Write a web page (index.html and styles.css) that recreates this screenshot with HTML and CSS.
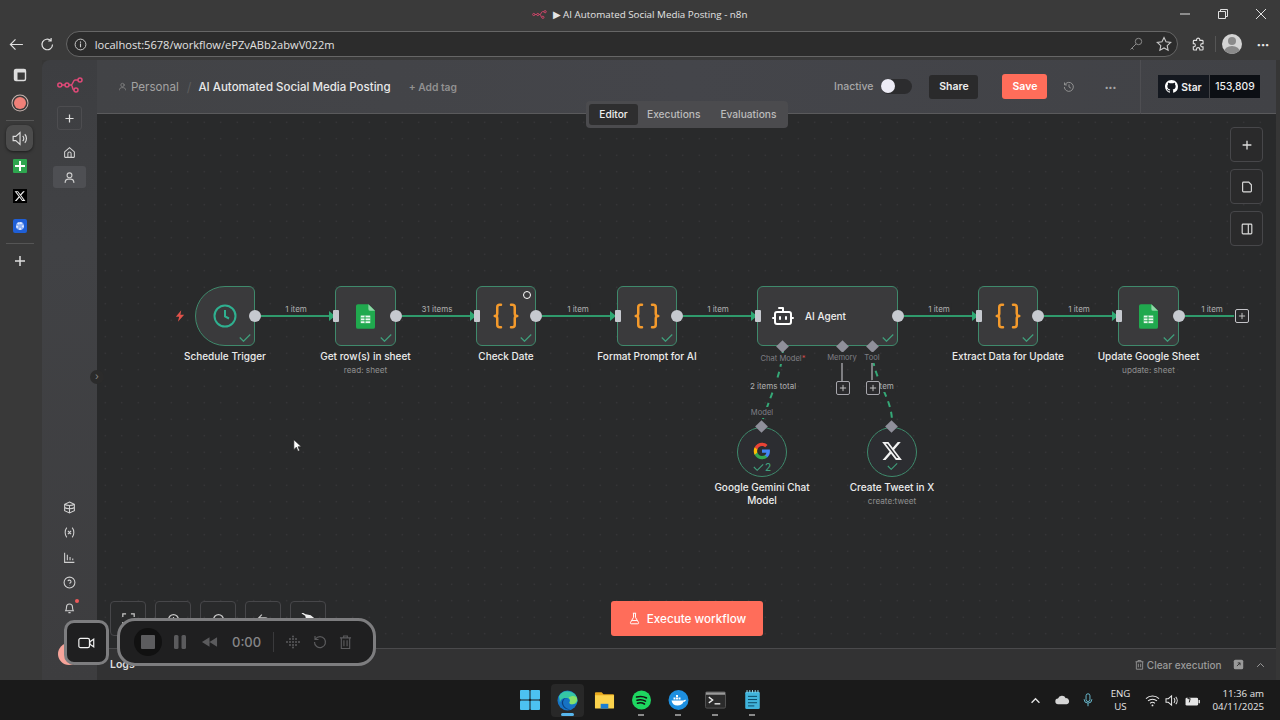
FILE: index.html
```html
<!DOCTYPE html>
<html lang="en">
<head>
<meta charset="utf-8">
<title>AI Automated Social Media Posting - n8n</title>
<link rel="stylesheet" href="styles.css">
</head>
<body>
<svg class="defs" width="0" height="0" aria-hidden="true">
  <defs>
    <symbol id="i-logo" viewBox="0 0 26 16"><g fill="none" stroke="currentColor" stroke-width="1.5"><circle cx="2.8" cy="8" r="2"/><circle cx="10" cy="8" r="2"/><circle cx="23" cy="3" r="2"/><circle cx="19" cy="13" r="2"/><path d="M4.8 8h3.2M12 8h2c2 0 2-5 4-5h3M14 8c2 0 1 5 3 5"/></g></symbol>
    <symbol id="i-plus" viewBox="0 0 16 16"><path d="M8 3v10M3 8h10" fill="none" stroke="currentColor" stroke-width="1.5"/></symbol>
    <symbol id="i-user" viewBox="0 0 24 24"><g fill="none" stroke="currentColor" stroke-width="2" stroke-linecap="round"><circle cx="12" cy="8" r="4.5"/><path d="M4 21v-1a6 6 0 0 1 6-5h4a6 6 0 0 1 6 5v1"/></g></symbol>
    <symbol id="i-braces" viewBox="0 0 24 24"><path fill="none" stroke="currentColor" stroke-width="2" stroke-linecap="round" stroke-linejoin="round" d="M8 3H7a2 2 0 0 0-2 2v5a2 2 0 0 1-2 2 2 2 0 0 1 2 2v5c0 1.1.9 2 2 2h1M16 21h1a2 2 0 0 0 2-2v-5c0-1.1.9-2 2-2a2 2 0 0 1-2-2V5a2 2 0 0 0-2-2h-1"/></symbol>
    <symbol id="i-sheet" viewBox="0 0 20 26"><path fill="#20a94e" d="M2 0h11l7 7v17a2 2 0 0 1-2 2H2a2 2 0 0 1-2-2V2a2 2 0 0 1 2-2z"/><path fill="#8fd6a6" d="M13 0l7 7h-5a2 2 0 0 1-2-2z"/><path fill="#e9f7ee" d="M5 12h10v8H5z"/><path stroke="#20a94e" stroke-width="1" d="M5 14.500h10M5 17.500h10M9.500 12v8"/></symbol>
    <symbol id="i-check" viewBox="0 0 16 12"><path d="M1 6l5 5 9-9" fill="none" stroke="currentColor" stroke-width="1.600"/></symbol>
    <symbol id="i-x" viewBox="0 0 24 24"><path fill="currentColor" d="M18.244 2.25h3.308l-7.227 8.26 8.502 11.24H16.17l-5.214-6.817L4.99 21.75H1.68l7.73-8.835L1.254 2.25H8.08l4.713 6.231zm-1.161 17.52h1.833L7.084 4.126H5.117z"/></symbol>
  </defs>
</svg>
<div class="app">
  <header class="titlebar">
    <div class="title-spacer"></div>
    <div class="title-text"><svg class="title-logo"><use href="#i-logo"/></svg><span>▶ AI Automated Social Media Posting - n8n</span></div>
    <div class="title-spacer window-controls">
      <svg class="wc" viewBox="0 0 12 12"><path d="M1 6h10" stroke="currentColor" fill="none"/></svg>
      <svg class="wc" viewBox="0 0 12 12"><path d="M1.500 3.500h7v7h-7zM3.500 3.500v-2h7v7h-2" stroke="currentColor" fill="none"/></svg>
      <svg class="wc" viewBox="0 0 12 12"><path d="M1 1l10 10M11 1L1 11" stroke="currentColor" fill="none"/></svg>
    </div>
  </header>

  <div class="browserbar">
    <svg class="nav-icon" viewBox="0 0 16 16"><path d="M15 8H2M7 2.500L1.500 8 7 13.500" fill="none" stroke="currentColor" stroke-width="1.300"/></svg>
    <svg class="nav-icon" viewBox="0 0 16 16"><path d="M13.500 8a5.700 5.700 0 1 1-1.800-4.200M12 1v3.200H8.800" fill="none" stroke="currentColor" stroke-width="1.300"/></svg>
    <div class="urlbar">
      <svg class="url-info" viewBox="0 0 14 14"><circle cx="7" cy="7" r="5.800" fill="none" stroke="currentColor"/><path d="M7 6v4M7 3.800v1.200" stroke="currentColor" stroke-width="1.200"/></svg>
      <span class="url-text">localhost:5678/workflow/ePZvABb2abwV022m</span>
      <svg class="url-key" viewBox="0 0 14 14"><circle cx="9.500" cy="4.500" r="3.200" fill="none" stroke="currentColor"/><path d="M7 7l-5.500 5.500M3 11l1.500 1.500" fill="none" stroke="currentColor"/></svg>
      <svg class="url-star" viewBox="0 0 16 16"><path d="M8 1.500l2 4.300 4.700.6-3.500 3.200.9 4.700L8 12l-4.100 2.300.9-4.700L1.300 6.400 6 5.800z" fill="none" stroke="currentColor" stroke-width="1.100"/></svg>
    </div>
    <svg class="ext-icon" viewBox="0 0 16 16"><path d="M6 2.500a1.800 1.800 0 0 1 3.500 0V3.500h2.500a1 1 0 0 1 1 1V7h-.8a1.800 1.800 0 0 0 0 3.600h.8V13a1 1 0 0 1-1 1H9.500v-.8a1.800 1.800 0 0 0-3.600 0v.8H3.500a1 1 0 0 1-1-1v-2.500h.8a1.800 1.800 0 0 0 0-3.500H2.500V4.500a1 1 0 0 1 1-1H6z" fill="none" stroke="currentColor" stroke-width="1.200"/></svg>
    <span class="bar-sep"></span>
    <div class="profile"><span class="profile-head"></span><span class="profile-body"></span></div>
    <span class="bar-dots">···</span>
  </div>

  <div class="main">
    <aside class="tabs">
      <svg class="tab-ico" viewBox="0 0 14 14"><rect x="1.500" y="1.500" width="11" height="11" rx="1.500" fill="none" stroke="currentColor" stroke-width="1.400"/><path d="M1.500 1.500h11v3h-8v8h-3z" fill="currentColor"/></svg>
      <span class="rec-dot"></span>
      <span class="tab-rule"></span>
      <span class="tab-active"><svg class="tab-speaker" viewBox="0 0 16 16"><path d="M2 6h2.500L8.500 2.500v11L4.500 10H2zM11 5.500a3.500 3.500 0 0 1 0 5M13 4a6 6 0 0 1 0 8" fill="none" stroke="currentColor" stroke-width="1.100"/></svg></span>
      <span class="tab-sheets"></span>
      <span class="tab-x"><svg class="tab-x-ico"><use href="#i-x"/></svg></span>
      <span class="tab-gear"><span class="gear-ring"></span></span>
      <span class="tab-rule tab-rule-low"></span>
      <svg class="tab-plus"><use href="#i-plus"/></svg>
    </aside>

    <nav class="sidebar">
      <svg class="side-logo"><use href="#i-logo"/></svg>
      <span class="side-add"><svg class="side-add-ico"><use href="#i-plus"/></svg></span>
      <svg class="side-ico side-home" viewBox="0 0 24 24"><path d="M3 11l9-8 9 8v9a1 1 0 0 1-1 1H4a1 1 0 0 1-1-1zM9 21v-7a3 3 0 0 1 6 0v7" fill="none" stroke="currentColor" stroke-width="2"/></svg>
      <span class="side-active"><svg class="side-ico"><use href="#i-user"/></svg></span>
      <div class="side-bottom">
        <svg class="side-ico" viewBox="0 0 24 24"><path d="M12 2l9 4v12l-9 4-9-4V6zM3 6c3 3 15 3 18 0M3 12c3 3 15 3 18 0M12 9v13" fill="none" stroke="currentColor" stroke-width="2"/></svg>
        <svg class="side-ico" viewBox="0 0 24 24"><path d="M7 3c-4 5-4 13 0 18M17 3c4 5 4 13 0 18M9 9l6 6M15 9l-6 6" fill="none" stroke="currentColor" stroke-width="2"/></svg>
        <svg class="side-ico" viewBox="0 0 24 24"><path d="M3 3v18h18M8 17V7M13 17v-6M18 17v-3" fill="none" stroke="currentColor" stroke-width="2"/></svg>
        <svg class="side-ico" viewBox="0 0 24 24"><circle cx="12" cy="12" r="10" fill="none" stroke="currentColor" stroke-width="2"/><path d="M9 9.500a3 3 0 0 1 5.800 1c0 2-2.800 2.500-2.800 3.500M12 17.500v.5" fill="none" stroke="currentColor" stroke-width="2"/></svg>
        <span class="bell"><svg class="side-ico" viewBox="0 0 24 24"><path d="M5 18c1-2 1.500-3 1.500-7a5.500 5.500 0 0 1 11 0c0 4 .5 5 1.500 7zM10 21.500h4" fill="none" stroke="currentColor" stroke-width="2"/></svg><span class="bell-dot"></span></span>
      </div>
      <span class="avatar"></span>
      <span class="side-toggle">›</span>
    </nav>

    <section class="content">
      <div class="header">
        <svg class="crumb-ico"><use href="#i-user"/></svg>
        <span class="crumb">Personal</span>
        <span class="crumb-sep">/</span>
        <span class="wf-name">AI Automated Social Media Posting</span>
        <span class="add-tag">+ Add tag</span>
        <span class="inactive">Inactive</span>
        <span class="toggle"><span class="knob"></span></span>
        <span class="btn-share">Share</span>
        <span class="btn-save">Save</span>
        <svg class="history" viewBox="0 0 16 16"><path d="M2.500 5a6 6 0 1 1-.7 3M2 2v3.200h3.200M8 4.500V8l2.500 1.500" fill="none" stroke="currentColor" stroke-width="1.200"/></svg>
        <span class="head-dots">···</span>
        <span class="head-rule"></span>
        <div class="gh"><span class="gh-star"><svg class="gh-ico" viewBox="0 0 16 16"><path fill="currentColor" d="M8 0C3.58 0 0 3.58 0 8c0 3.54 2.29 6.53 5.47 7.59.4.07.55-.17.55-.38 0-.19-.01-.82-.01-1.49-2.01.37-2.53-.49-2.69-.94-.09-.23-.48-.94-.82-1.13-.28-.15-.68-.52-.01-.53.63-.01 1.08.58 1.23.82.72 1.21 1.87.87 2.33.66.07-.52.28-.87.51-1.07-1.78-.2-3.64-.89-3.64-3.95 0-.87.31-1.59.82-2.15-.08-.2-.36-1.02.08-2.12 0 0 .67-.21 2.2.82.64-.18 1.32-.27 2-.27s1.36.09 2 .27c1.53-1.04 2.2-.82 2.2-.82.44 1.1.16 1.92.08 2.12.51.56.82 1.27.82 2.15 0 3.070-1.870 3.750-3.650 3.950.29.25.54.73.54 1.480 0 1.070-.01 1.930-.01 2.200 0 .21.15.46.55.38A8.010 8.010 0 0 0 16 8c0-4.420-3.580-8-8-8z"/></svg>Star</span><span class="gh-count">153,809</span></div>
      </div>

      <div class="canvas">
        <svg class="edges" viewBox="0 0 1180 534">
          <g class="edge-main">
            <path d="M164 202H234M305 202H375M445 202H515M586 202H655M807 202H876M947 202H1016M1088 202H1137"/>
          </g>
          <g class="edge-arrow">
            <path d="M232 197l6 5-6 5zM373 197l6 5-6 5zM513 197l6 5-6 5zM654 197l6 5-6 5zM875 197l6 5-6 5zM1015 197l6 5-6 5z"/>
          </g>
          <path class="edge-dash" d="M686 236C684 262 672 285 665 308M776 246C780 270 795 285 795 308"/>
          <path class="edge-grey" d="M745 246V267M775 246V267"/>
        </svg>

        <span class="edge-label el-1">1 item</span>
        <span class="edge-label el-2">31 items</span>
        <span class="edge-label el-3">1 item</span>
        <span class="edge-label el-4">1 item</span>
        <span class="edge-label el-5">1 item</span>
        <span class="edge-label el-6">1 item</span>
        <span class="edge-label el-7">1 item</span>
        <span class="edge-label el-8">2 items total</span>
        <span class="edge-label el-9">1 item</span>

        <svg class="bolt" viewBox="0 0 12 14"><path d="M7.500 0L1 8h4l-1.500 6L11 5.500H6.500z" fill="currentColor"/></svg>

        <div class="node node-trigger n-schedule">
          <svg class="ico-clock" viewBox="0 0 24 24"><circle cx="12" cy="12" r="10.500" fill="none" stroke="currentColor" stroke-width="2"/><path d="M12 6v6.500l4 2" fill="none" stroke="currentColor" stroke-width="2"/></svg>
          <svg class="tick"><use href="#i-check"/></svg>
          <span class="port-out"></span>
          <div class="node-label">Schedule Trigger</div>
        </div>
        <div class="node n-rows">
          <svg class="ico-sheet"><use href="#i-sheet"/></svg>
          <svg class="tick"><use href="#i-check"/></svg>
          <span class="port-in"></span><span class="port-out"></span>
          <div class="node-label">Get row(s) in sheet<small>read: sheet</small></div>
        </div>
        <div class="node n-date">
          <svg class="ico-braces"><use href="#i-braces"/></svg>
          <span class="spinner"></span>
          <svg class="tick"><use href="#i-check"/></svg>
          <span class="port-in"></span><span class="port-out"></span>
          <div class="node-label">Check Date</div>
        </div>
        <div class="node n-format">
          <svg class="ico-braces"><use href="#i-braces"/></svg>
          <svg class="tick"><use href="#i-check"/></svg>
          <span class="port-in"></span><span class="port-out"></span>
          <div class="node-label">Format Prompt for AI</div>
        </div>
        <div class="node n-agent">
          <svg class="ico-bot" viewBox="0 0 24 24"><path d="M12 8V4H8M2 14h2M20 14h2" fill="none" stroke="currentColor" stroke-width="2" stroke-linecap="round" stroke-linejoin="round"/><rect x="4" y="8" width="16" height="12" rx="2" fill="none" stroke="currentColor" stroke-width="2"/><path d="M9 13v2M15 13v2" stroke="currentColor" stroke-width="2" stroke-linecap="round"/></svg>
          <span class="agent-name">AI Agent</span>
          <svg class="tick"><use href="#i-check"/></svg>
          <span class="port-in"></span><span class="port-out"></span>
          <span class="diamond d-chat"></span><span class="diamond d-mem"></span><span class="diamond d-tool"></span>
        </div>
        <span class="port-label pl-chat">Chat Model<em>*</em></span>
        <span class="port-label pl-mem">Memory</span>
        <span class="port-label pl-tool">Tool</span>
        <span class="port-label pl-model">Model</span>
        <span class="mini-plus mp-mem"><svg class="mini-ico"><use href="#i-plus"/></svg></span>
        <span class="mini-plus mp-tool"><svg class="mini-ico"><use href="#i-plus"/></svg></span>
        <span class="mini-plus mp-end"><svg class="mini-ico"><use href="#i-plus"/></svg></span>

        <div class="node n-extract">
          <svg class="ico-braces"><use href="#i-braces"/></svg>
          <svg class="tick"><use href="#i-check"/></svg>
          <span class="port-in"></span><span class="port-out"></span>
          <div class="node-label">Extract Data for Update</div>
        </div>
        <div class="node n-update">
          <svg class="ico-sheet"><use href="#i-sheet"/></svg>
          <svg class="tick"><use href="#i-check"/></svg>
          <span class="port-in"></span><span class="port-out"></span>
          <div class="node-label">Update Google Sheet<small>update: sheet</small></div>
        </div>

        <div class="node node-round n-gemini">
          <svg class="ico-google" viewBox="0 0 24 24"><path fill="#4285f4" d="M22.560 12.250c0-.78-.07-1.530-.2-2.250H12v4.260h5.920c-.26 1.370-1.040 2.530-2.210 3.310v2.770h3.570c2.080-1.920 3.280-4.740 3.280-8.090z"/><path fill="#34a853" d="M12 23c2.970 0 5.460-.98 7.280-2.660l-3.570-2.770c-.98.66-2.230 1.060-3.710 1.060-2.860 0-5.290-1.930-6.160-4.530H2.180v2.840C3.990 20.530 7.700 23 12 23z"/><path fill="#fbbc05" d="M5.840 14.090c-.22-.66-.35-1.360-.35-2.090s.13-1.430.35-2.090V7.070H2.180C1.430 8.550 1 10.220 1 12s.43 3.450 1.180 4.930l2.850-2.220.81-.62z"/><path fill="#ea4335" d="M12 5.380c1.620 0 3.060.56 4.210 1.640l3.150-3.150C17.450 2.090 14.970 1 12 1 7.700 1 3.990 3.470 2.180 7.070l3.660 2.840c.87-2.600 3.300-4.530 6.160-4.530z"/></svg>
          <span class="round-status"><svg class="tick-round"><use href="#i-check"/></svg>2</span>
          <span class="diamond d-top"></span>
          <div class="node-label">Google Gemini Chat Model</div>
        </div>
        <div class="node node-round n-tweet">
          <svg class="ico-x"><use href="#i-x"/></svg>
          <span class="round-status"><svg class="tick-round"><use href="#i-check"/></svg></span>
          <span class="diamond d-top"></span>
          <div class="node-label">Create Tweet in X<small>create:tweet</small></div>
        </div>

        <div class="side-tools">
          <span class="tool-btn"><svg class="tool-ico"><use href="#i-plus"/></svg></span>
          <span class="tool-btn"><svg class="tool-ico" viewBox="0 0 16 16"><path d="M3 3.500a1 1 0 0 1 1-1h6l3 3v7a1 1 0 0 1-1 1H4a1 1 0 0 1-1-1z" fill="none" stroke="currentColor" stroke-width="1.300"/></svg></span>
          <span class="tool-btn"><svg class="tool-ico" viewBox="0 0 16 16"><rect x="2.500" y="2.500" width="11" height="11" rx="1" fill="none" stroke="currentColor" stroke-width="1.300"/><path d="M9.500 2.500v11" stroke="currentColor" stroke-width="1.300"/></svg></span>
        </div>

        <div class="canvas-tools">
          <span class="ct-btn"><svg class="ct-ico" viewBox="0 0 16 16"><path d="M1 5V1h4M11 1h4v4M15 11v4h-4M5 15H1v-4" fill="none" stroke="currentColor" stroke-width="1.500"/></svg></span>
          <span class="ct-btn"><svg class="ct-ico" viewBox="0 0 16 16"><circle cx="8" cy="8" r="6" fill="none" stroke="currentColor" stroke-width="1.500"/><path d="M5 8h6M8 5v6" stroke="currentColor" stroke-width="1.500"/></svg></span>
          <span class="ct-btn"><svg class="ct-ico" viewBox="0 0 16 16"><circle cx="8" cy="8" r="6" fill="none" stroke="currentColor" stroke-width="1.500"/><path d="M5 8h6" stroke="currentColor" stroke-width="1.500"/></svg></span>
          <span class="ct-btn"><svg class="ct-ico" viewBox="0 0 16 16"><path d="M6 2L2 6l4 4M2 6h8a4 4 0 0 1 4 4v3" fill="none" stroke="currentColor" stroke-width="1.500"/></svg></span>
          <span class="ct-btn"><svg class="ct-ico ct-broom" viewBox="0 0 16 16"><path d="M1 0l6 3.500M5 2l5 1 5 4-2 3-7-4z" fill="currentColor" stroke="currentColor" stroke-width="1.500"/></svg></span>
        </div>

        <button class="execute"><svg class="flask" viewBox="0 0 16 16"><path d="M6 1.500h4M6.800 1.500v5L3 13a1 1 0 0 0 .9 1.500h8.200A1 1 0 0 0 13 13L9.200 6.500v-5M5 10.500h6" fill="none" stroke="currentColor" stroke-width="1.200"/></svg>Execute workflow</button>

        <div class="editor-tabs"><span class="et et-active">Editor</span><span class="et">Executions</span><span class="et">Evaluations</span></div>

        <svg class="cursor" viewBox="0 0 12 16"><path d="M1 1v12l3-3 2 5 2-1-2-4.500h4z" fill="#fff" stroke="#222" stroke-width=".8"/></svg>
      </div>

      <div class="logs">
        <span class="logs-title">Logs</span>
        <span class="clear"><svg class="clear-ico" viewBox="0 0 14 14"><path d="M2 3.500h10M5 3.500V2h4v1.500M3 3.500V13h8V3.500M5.500 6v4.500M8.500 6v4.500" fill="none" stroke="currentColor" stroke-width="1.100"/></svg>Clear execution</span>
        <svg class="pop-ico" viewBox="0 0 14 14"><rect x="1" y="1" width="12" height="12" rx="2" fill="currentColor"/><path d="M5 9l4-4M6 5h3v3" fill="none" stroke="#333" stroke-width="1.200"/></svg>
        <svg class="up-ico" viewBox="0 0 12 8"><path d="M1.500 6.500L6 2l4.500 4.500" fill="none" stroke="currentColor" stroke-width="1.300"/></svg>
      </div>
    </section>

    <div class="cam-box"><svg class="cam-ico" viewBox="0 0 20 14"><rect x="1" y="1.500" width="12.500" height="11" rx="2" fill="none" stroke="currentColor" stroke-width="1.400"/><path d="M14 5.500l4.500-3v9l-4.500-3z" fill="none" stroke="currentColor" stroke-width="1.400"/></svg></div>
    <div class="recorder">
      <span class="rec-stop"><span class="rec-square"></span></span>
      <svg class="rec-pause" viewBox="0 0 14 16"><rect x="1" y="1" width="4.500" height="14" rx="1.500" fill="currentColor"/><rect x="8.500" y="1" width="4.500" height="14" rx="1.500" fill="currentColor"/></svg>
      <svg class="rec-back" viewBox="0 0 18 12"><path d="M9 1L1 6l8 5zM17 1L9 6l8 5z" fill="currentColor"/></svg>
      <span class="rec-time">0:00</span>
      <span class="rec-rule"></span>
      <svg class="rec-grid" viewBox="0 0 16 14"><g fill="currentColor"><circle cx="2" cy="7" r="1"/><circle cx="5" cy="4" r="1"/><circle cx="5" cy="7" r="1"/><circle cx="5" cy="10" r="1"/><circle cx="8" cy="1.500" r="1"/><circle cx="8" cy="4" r="1"/><circle cx="8" cy="7" r="1"/><circle cx="8" cy="10" r="1"/><circle cx="8" cy="12.500" r="1"/><circle cx="11" cy="4" r="1"/><circle cx="11" cy="7" r="1"/><circle cx="11" cy="10" r="1"/><circle cx="14" cy="7" r="1"/></g></svg>
      <svg class="rec-undo" viewBox="0 0 14 14"><path d="M2.500 4a5.500 5.500 0 1 1-1 3M2 1v3.500h3.500" fill="none" stroke="currentColor" stroke-width="1.200"/></svg>
      <svg class="rec-trash" viewBox="0 0 14 16"><path d="M1 3.500h12M5 3.500V1.500h4v2M2.500 3.500V15h9V3.500M5.300 6v6.500M8.700 6v6.500" fill="none" stroke="currentColor" stroke-width="1.200"/></svg>
    </div>
  </div>

  <footer class="taskbar">
    <div class="task-apps">
      <svg class="app-win" viewBox="0 0 20 20"><g fill="#4cc2f1"><rect x="0" y="0" width="9.500" height="9.500" rx="1"/><rect x="10.500" y="0" width="9.500" height="9.500" rx="1"/><rect x="0" y="10.500" width="9.500" height="9.500" rx="1"/><rect x="10.500" y="10.500" width="9.500" height="9.500" rx="1"/></g></svg>
      <span class="app-edge-wrap"><svg class="app-edge" viewBox="0 0 22 22"><circle cx="11" cy="11" r="10.500" fill="#1672c4"/><path d="M2 6.500A10.500 10.500 0 0 1 21.500 11c0 2.500-2.500 4-5 4-2 0-3.500-.8-3.500-2 1-1.500.5-4-2-4.500C7 7.800 4 9 3 13c-.3-2.500-.5-4.500-1-6.500z" fill="#35c6a5"/><path d="M21 8.500c.7 3-2 6.500-5 6.500-2 0-3-.8-3-2 1.500-2 .5-4-1-5 4-2.500 7.500-2 9 .5z" fill="#86e06a"/><path d="M11 8.500c-3.500 0-5 3-4.500 6S10 20 14 20.500c-3 .5-7-1-8.500-5S7 7.500 11 8.500z" fill="#0b3f7d"/></svg></span>
      <svg class="app-ico" viewBox="0 0 22 20"><path d="M1 3a1 1 0 0 1 1-1h6l2 2h10a1 1 0 0 1 1 1v1H1z" fill="#e8a91e"/><path d="M1 5h20v13a1 1 0 0 1-1 1H2a1 1 0 0 1-1-1z" fill="#fcd34d"/><path d="M7 14h8v5H7z" fill="#1d7fd1"/></svg>
      <span class="app-run"><svg class="app-ico" viewBox="0 0 20 20"><circle cx="10" cy="10" r="9.500" fill="#1ed760"/><path d="M5 7c4-1 7-.7 10 1M5.500 10.200c3.200-.8 6-.5 8.500 1M6 13.200c2.500-.6 5-.4 7 .8" fill="none" stroke="#111" stroke-width="1.500" stroke-linecap="round"/></svg></span>
      <span class="app-run"><svg class="app-ico" viewBox="0 0 20 20"><circle cx="10" cy="10" r="10" fill="#1d8fe0"/><path d="M3 10.500h12c.7-.8 1.700-1 2.500-.5-.5 1.300-1.500 1.800-2.500 1.800-1 2.500-3 3.700-6 3.700-3.500 0-5.500-2-6-5z" fill="#fff"/><path d="M5 7.500h2v2H5zM7.500 7.500h2v2h-2zM10 7.500h2v2h-2zM7.500 5h2v2h-2z" fill="#fff"/></svg></span>
      <span class="app-run"><svg class="app-ico" viewBox="0 0 22 18"><rect x=".5" y=".5" width="21" height="17" rx="1.500" fill="#2b2b2b" stroke="#555"/><rect x="1" y="1" width="20" height="2.500" fill="#9a9a9a"/><path d="M4 6l4 3-4 3" fill="none" stroke="#eee" stroke-width="1.400"/><path d="M10 13h6" stroke="#eee" stroke-width="1.400"/></svg></span>
      <span class="app-run"><svg class="app-ico" viewBox="0 0 18 22"><rect x="1" y="2" width="16" height="19" rx="1.500" fill="#41b4dc"/><path d="M4 7h10M4 10.500h10M4 14h10M4 17.500h7" stroke="#0c4a66" stroke-width="1.100"/><path d="M3 0v3M6 0v3M9 0v3M12 0v3M15 0v3" stroke="#9adcf0" stroke-width="1"/></svg></span>
    </div>
    <div class="tray">
      <svg class="tray-chev" viewBox="0 0 12 8"><path d="M1.500 6.500L6 2l4.500 4.500" fill="none" stroke="currentColor" stroke-width="1.500"/></svg>
      <svg class="tray-cloud" viewBox="0 0 16 10"><path d="M3.500 9.500a3 3 0 0 1-.3-6A4.500 4.500 0 0 1 11.500 3a3.300 3.300 0 0 1 1 6.500z" fill="currentColor"/></svg>
      <svg class="tray-mic" viewBox="0 0 12 18"><rect x="3.500" y="1" width="5" height="10" rx="2.500" fill="none" stroke="currentColor" stroke-width="1.200"/><path d="M1 8a5 5 0 0 0 10 0M6 13v4" fill="none" stroke="currentColor" stroke-width="1.200"/></svg>
      <div class="lang">ENG<br>US</div>
      <svg class="tray-ico tray-wifi" viewBox="0 0 16 14"><path d="M1 5a10 10 0 0 1 14 0M3.200 7.500a7 7 0 0 1 9.600 0M5.500 10a3.500 3.500 0 0 1 5 0" fill="none" stroke="currentColor" stroke-width="1.200"/><circle cx="8" cy="12.300" r="1" fill="currentColor"/></svg>
      <svg class="tray-ico" viewBox="0 0 16 14"><path d="M1 5h2.500L7 2v10L3.500 9H1zM9.500 4.500a3.500 3.500 0 0 1 0 5M11.500 3a6 6 0 0 1 0 8" fill="none" stroke="currentColor" stroke-width="1.100"/></svg>
      <svg class="tray-ico" viewBox="0 0 16 14"><rect x=".5" y="4" width="13.500" height="8.500" rx="1.500" fill="currentColor"/><rect x="14.500" y="6.500" width="1.500" height="3.500" fill="currentColor"/><path d="M5 0L3 5h2.500L4.500 9" fill="none" stroke="#1a1a1a" stroke-width="1"/></svg>
      <div class="clock">11:36 am<br>04/11/2025</div>
    </div>
  </footer>
</div>
</body>
</html>
```
FILE: styles.css
```css
* { box-sizing: border-box; }
html, body { margin: 0; height: 100%; background: #1a1a1a; }
.defs { position: absolute; }
svg { display: block; }
.app { width: 1280px; height: 720px; display: flex; flex-direction: column; overflow: hidden; font-family: Inter, "Liberation Sans", sans-serif; color: #e0e0e0; }

/* Title bar */
.titlebar { height: 28px; display: flex; align-items: center; background: #3a3a3a; }
.title-spacer { flex: 1; }
.title-text { display: flex; align-items: center; gap: 6px; font: 400 9.800px "Open Sans", sans-serif; color: #e4e4e4; padding-top: 1px; margin-left: 12px; }
.title-logo { width: 15px; height: 9px; color: #e0466e; }
.window-controls { display: flex; justify-content: flex-end; gap: 26px; padding-right: 13px; color: #e0e0e0; }
.wc { width: 12px; height: 12px; }

/* Browser bar */
.browserbar { height: 32px; display: flex; align-items: center; background: #3a3a3a; padding: 0 11px 0 9px; color: #e0e0e0; }
.nav-icon { width: 15px; height: 15px; margin-right: 16px; }
.nav-icon + .nav-icon { margin-right: 12px; }
.urlbar { width: 1112px; margin-left: -1px; height: 26px; flex: none; display: flex; align-items: center; background: #2c2c2c; border: 1px solid #666; border-radius: 13px; padding: 0 5px 0 7px; }
.url-info { width: 13px; height: 13px; color: #d0d0d0; }
.url-text { margin-left: 8px; font: 400 11.100px "Open Sans", sans-serif; color: #e2e2e2; }
.url-key { width: 14px; height: 14px; margin-left: auto; color: #8a8a8a; }
.url-star { width: 16px; height: 16px; margin-left: 13px; color: #c8c8c8; }
.ext-icon { width: 15px; height: 15px; margin-left: 13px; }
.bar-sep { width: 1px; height: 16px; background: #555; margin-left: 10px; }
.profile { width: 20px; height: 20px; border-radius: 50%; background: #d4d4d4; margin-left: 6px; position: relative; overflow: hidden; flex: none; }
.profile-head { position: absolute; left: 6px; top: 3px; width: 8px; height: 8px; border-radius: 50%; background: #8a8a8a; }
.profile-body { position: absolute; left: 2px; top: 12px; width: 16px; height: 12px; border-radius: 50%; background: #8a8a8a; }
.bar-dots { margin-left: 14px; font-size: 14px; font-weight: 700; color: #e8e8e8; letter-spacing: -.5px; }

/* Main */
.main { flex: 1; display: flex; position: relative; background: #363636; min-height: 0; }
.tabs { width: 42px; flex: none; display: flex; flex-direction: column; align-items: center; color: #d8d8d8; background: #393939; padding: 8px 3px 0 0; }
.tab-ico { width: 14px; height: 14px; color: #ddd; }
.tab-speaker { width: 17px; height: 17px; color: #ddd; }
.rec-dot { width: 12px; height: 12px; border-radius: 50%; background: #f08078; box-shadow: 0 0 0 1.500px #3a3a3a, 0 0 0 2.500px #c9b5b0; margin: 15px 0 11px; }
.tab-rule { width: 28px; height: 1px; background: #555; }
.tab-active { width: 27px; height: 26px; margin: 4px 0 8px; border-radius: 7px; background: #4c4c4c; box-shadow: 0 1px 3px #0008; display: flex; align-items: center; justify-content: center; }
.tab-sheets { width: 14px; height: 14px; margin-bottom: 16px; background: linear-gradient(#fff,#fff) center/10px 2px no-repeat, linear-gradient(#fff,#fff) center/2px 10px no-repeat, #2ea64f; border-radius: 1px; }
.tab-x { width: 14px; height: 14px; margin-bottom: 16px; background: #000; display: flex; align-items: center; justify-content: center; }
.tab-x-ico { width: 12px; height: 12px; color: #eee; }
.tab-gear { width: 14px; height: 14px; border-radius: 2px; background: #1f5fd6; display: flex; align-items: center; justify-content: center; }
.gear-ring { width: 8px; height: 8px; border-radius: 50%; border: 2px dotted #dfe9ff; background: #8fb2f5; }
.tab-rule-low { margin-top: 10px; }
.tab-plus { width: 16px; height: 16px; margin-top: 9px; color: #ddd; }

.sidebar { width: 55px; flex: none; display: flex; flex-direction: column; align-items: center; position: relative; background: linear-gradient(#3d3e41, #414245 30%, #3d3d3f); border-top-left-radius: 8px; padding-top: 17px; color: #cfcfcf; }
.side-logo { width: 26px; height: 16px; color: #df4a78; }
.side-add { width: 25px; height: 24px; margin-top: 13px; border: 1px solid #4d4d50; border-radius: 3px; display: flex; align-items: center; justify-content: center; }
.side-add-ico { width: 13px; height: 13px; color: #ddd; }
.side-ico { width: 13px; height: 13px; }
.side-home { margin-top: 16px; }
.side-active { width: 33px; height: 22px; margin-top: 7px; background: #4e4f53; border-radius: 3px; display: flex; align-items: center; justify-content: center; }
.side-bottom { position: absolute; left: 0; right: 0; top: 441px; display: flex; flex-direction: column; align-items: center; gap: 12px; }
.bell { position: relative; display: block; }
.bell-dot { position: absolute; right: -3px; top: -2px; width: 4px; height: 4px; border-radius: 50%; background: #ef5a5a; }
.avatar { position: absolute; left: 16px; top: 583px; width: 22px; height: 22px; border-radius: 50%; background: #f7a49a; }
.side-toggle { position: absolute; right: -7px; top: 310px; width: 14px; height: 14px; border-radius: 50%; background: #2b2b2b; font-size: 10px; line-height: 12px; text-align: center; color: #888; z-index: 3; }

.content { flex: 1; min-width: 0; display: flex; flex-direction: column; margin-right: 4px; }
.header { height: 54px; flex: none; display: flex; align-items: center; white-space: nowrap; background: linear-gradient(90deg, #424346, #44454a 50%, #414246); border-bottom: 1px solid #5a5a5c; padding: 0 16px 0 21px; }
.crumb-ico { width: 9px; height: 9px; color: #8a8a8a; flex: none; }
.crumb { margin-left: 4px; font-size: 11.600px; color: #a2a2a2; }
.crumb-sep { margin-left: 8px; font-size: 13px; color: #5c5c5c; }
.wf-name { margin-left: 7px; font-size: 11.500px; font-weight: 500; color: #e8e8e8; }
.add-tag { margin-left: 18px; font-size: 10.300px; font-weight: 600; color: #919191; }
.inactive { margin-left: auto; font-size: 10.500px; font-weight: 500; color: #a8a8a8; }
.toggle { width: 31px; height: 15px; margin-left: 8px; background: #2c2c2e; border-radius: 8px; position: relative; flex: none; }
.knob { position: absolute; left: 0; top: 0; width: 14px; height: 14px; border-radius: 50%; background: #ecebf5; }
.btn-share { margin-left: 17px; width: 49px; height: 24px; flex: none; background: #2a2a2b; border-radius: 3px; font-size: 10.500px; font-weight: 600; line-height: 24px; text-align: center; color: #eee; }
.btn-save { margin-left: 24px; width: 45px; height: 25px; flex: none; background: #ff6d5a; border-radius: 3px; font-size: 10.500px; font-weight: 600; line-height: 25px; text-align: center; color: #fff; }
.history { width: 12px; height: 12px; margin-left: 16px; color: #9a9a9a; flex: none; }
.head-dots { margin-left: 29px; font-size: 13px; font-weight: 700; color: #a5a5a5; letter-spacing: -.5px; }
.head-rule { width: 1px; height: 54px; margin-left: 24px; background: #4e4e52; flex: none; }
.gh { margin-left: 17px; height: 23px; display: flex; font-size: 10.300px; font-weight: 500; color: #eee; flex: none; }
.gh-star { width: 51px; display: flex; align-items: center; justify-content: center; gap: 3px; background: #14181f; font-weight: 600; margin-right: 1px; }
.gh-ico { width: 13px; height: 13px; color: #fff; }
.gh-count { width: 50px; line-height: 23px; text-align: center; background: #0c0f14; }

/* Canvas */
.canvas { flex: 1; position: relative; background-color: #292a2b; background-image: radial-gradient(circle, #3d3d3f 0.700px, transparent 1px); background-size: 16.500px 16.500px; }
.edges { position: absolute; left: 0; top: 0; width: 1180px; height: 534px; pointer-events: none; }
.edge-main path { fill: none; stroke: #2f9a6c; stroke-width: 1.800; }
.edge-arrow path { fill: #2fa873; }
.edge-dash { fill: none; stroke: #35a877; stroke-width: 2; stroke-dasharray: 6 5; }
.edge-grey { fill: none; stroke: #a3a3a8; stroke-width: 1.400; }

.edge-label { position: absolute; transform: translateX(-50%); font-size: 8px; line-height: 12px; color: #b0b0b0; white-space: nowrap; background: #292a2b; padding: 0 1px; }
.el-1 { left: 199px; top: 189px; } .el-2 { left: 340px; top: 189px; } .el-3 { left: 481px; top: 189px; }
.el-4 { left: 621px; top: 189px; } .el-5 { left: 842px; top: 189px; } .el-6 { left: 982px; top: 189px; }
.el-7 { left: 1115px; top: 189px; } .el-8 { left: 676px; top: 266px; } .el-9 { left: 786px; top: 266px; }

.bolt { position: absolute; left: 78px; top: 196px; width: 10px; height: 12px; color: #e0524a; }

.node { position: absolute; top: 172px; width: 61px; height: 60px; background: #3a3a3c; border: 1.500px solid #3f8a6c; border-radius: 6px; display: flex; align-items: center; justify-content: center; }
.node-trigger { border-radius: 30px 6px 6px 30px; width: 60px; }
.n-schedule { left: 98px; } .n-rows { left: 238px; } .n-date { left: 379px; width: 60px; } .n-format { left: 520px; width: 60px; }
.n-agent { left: 660px; width: 141px; justify-content: flex-start; padding-left: 13px; }
.n-extract { left: 881px; width: 60px; } .n-update { left: 1021px; }
.node-round { top: 313px; width: 50px; height: 50px; border-radius: 50%; background: #2c2d31; flex-direction: column; }
.n-gemini { left: 640px; } .n-tweet { left: 770px; }

.node-label { position: absolute; left: 50%; top: 63px; width: 170px; transform: translateX(-50%); text-align: center; font-size: 10px; font-weight: 500; line-height: 12.500px; color: #ececec; }
.node-label small { display: block; margin-top: 1px; font-size: 8.200px; font-weight: 400; color: #8f8f8f; }
.node-round .node-label { top: 53px; width: 110px; }
.ico-clock { width: 24px; height: 24px; color: #2fb090; }
.ico-sheet { width: 19px; height: 25px; }
.ico-braces { width: 30px; height: 30px; color: #f49a2c; }
.ico-bot { width: 24px; height: 24px; color: #fff; }
.agent-name { margin-left: 10px; font-size: 10px; font-weight: 500; color: #eee; }
.tick { position: absolute; right: 3px; bottom: 3px; width: 12px; height: 9px; color: #3fa07c; }
.spinner { position: absolute; right: 4px; top: 4px; width: 8px; height: 8px; border: 1.500px solid #fff; border-radius: 50%; }
.port-out { position: absolute; right: -7px; top: 23px; width: 12px; height: 12px; border-radius: 50%; background: #c6c9cf; }
.port-in { position: absolute; left: -3.500px; top: 23px; width: 6px; height: 12px; background: #c6c9cf; border-radius: 1px; }
.diamond { position: absolute; width: 9px; height: 9px; background: #8f8f9a; transform: rotate(45deg); }
.d-chat { left: 20px; bottom: -6px; } .d-mem { left: 80px; bottom: -6px; } .d-tool { left: 110px; bottom: -6px; }
.d-top { left: 19px; top: -6px; }
.port-label { position: absolute; transform: translateX(-50%); font-size: 7.600px; line-height: 11px; color: #7f7f85; white-space: nowrap; background: #292a2b; }
.port-label em { font-style: normal; color: #d04a4a; }
.pl-chat { left: 686px; top: 239px; } .pl-mem { left: 745px; top: 238px; } .pl-tool { left: 775px; top: 238px; }
.pl-model { left: 665px; top: 293px; }
.mini-plus { position: absolute; top: 267px; width: 14px; height: 14px; border: 1.300px solid #a6a6ac; border-radius: 2px; background: #2a2a2c; display: flex; align-items: center; justify-content: center; }
.mp-mem { left: 738.500px; } .mp-tool { left: 768.500px; } .mp-end { left: 1137.500px; top: 195px; border-color: #c4c4c8; }
.mini-ico { width: 10px; height: 10px; color: #c8c8c8; }
.ico-google { width: 18px; height: 18px; margin-top: -3px; }
.ico-x { width: 22px; height: 22px; margin-top: -3px; color: #f2f2f2; }
.round-status { position: absolute; left: 0; right: 0; top: 34px; display: flex; justify-content: center; align-items: center; gap: 1px; font-size: 10px; font-weight: 500; line-height: 10px; color: #3fa07c; }
.tick-round { width: 11px; height: 8px; }

.side-tools { position: absolute; right: 13px; top: 13px; display: flex; flex-direction: column; gap: 7px; }
.tool-btn { width: 33px; height: 35px; border: 1px solid #47474a; border-radius: 4px; display: flex; align-items: center; justify-content: center; background: #2a2a2b; }
.tool-ico { width: 14px; height: 14px; color: #ddd; }
.canvas-tools { position: absolute; left: 13px; top: 487px; display: flex; gap: 9px; }
.ct-btn { width: 36px; height: 35px; border: 1px solid #47474a; border-radius: 4px; display: flex; justify-content: center; padding-top: 11px; }
.ct-ico { width: 13px; height: 13px; color: #c9c9c9; }
.ct-broom { width: 15px; height: 15px; color: #eee; }
.execute { position: absolute; left: 514px; top: 487px; width: 152px; height: 35px; border: 0; border-radius: 3px; background: #ff6d5a; color: #fff; font: 500 11.700px Inter, sans-serif; display: flex; align-items: center; justify-content: center; gap: 6px; padding: 0; }
.flask { width: 13px; height: 13px; }
.editor-tabs { position: absolute; left: 489px; top: -13px; width: 202px; height: 27px; padding: 3px; display: flex; background: #4b4b4e; border-radius: 4px; font-size: 10.200px; font-weight: 500; color: #bcbcbc; white-space: nowrap; }
.et { padding: 0 10px; line-height: 21px; flex: none; }
.et-active { background: #2e2e2f; color: #eee; border-radius: 3px; width: 49px; padding: 0; text-align: center; margin-right: -1px; }
.cursor { position: absolute; left: 196px; top: 324px; width: 10px; height: 15px; }

.logs { height: 32px; flex: none; display: flex; align-items: center; background: #323233; border-top: 1px solid #4a4a4c; padding: 0 11px 0 13px; position: relative; }
.logs-title { font-size: 10.500px; font-weight: 600; color: #dedede; }
.clear { margin-left: auto; display: flex; align-items: center; gap: 2px; font-size: 10px; font-weight: 500; color: #9a9a9a; }
.clear-ico { width: 11px; height: 11px; }
.pop-ico { width: 11px; height: 11px; margin-left: 11.500px; color: #9a9a9a; }
.up-ico { width: 9px; height: 6px; margin-left: 12px; color: #9a9a9a; }

/* Screen recorder overlay */
.cam-box { position: absolute; left: 64px; top: 560px; width: 45px; height: 45px; border: 3px solid #7d7d7f; border-radius: 10px; background: #1f1f20; display: flex; align-items: center; justify-content: center; z-index: 5; }
.cam-ico { width: 17px; height: 12px; color: #f2f2f2; }
.recorder { position: absolute; left: 117px; top: 558px; width: 259px; height: 48px; border: 3px solid #7d7d7f; border-radius: 18px; background: #1f1f20; display: flex; align-items: center; z-index: 5; color: #5b5b5d; padding-left: 14px; }
.rec-stop { width: 28px; height: 28px; border-radius: 50%; background: #111; display: flex; align-items: center; justify-content: center; }
.rec-square { width: 14px; height: 14px; background: #5c5c5e; border-radius: 1px; }
.rec-pause { width: 14px; height: 16px; margin-left: 11px; }
.rec-back { width: 17px; height: 12px; margin-left: 14px; }
.rec-time { margin-left: 14px; font-size: 13px; font-weight: 500; color: #868688; }
.rec-rule { width: 1px; height: 20px; margin-left: 12px; background: #3a3a3c; }
.rec-grid { width: 16px; height: 14px; margin-left: 11px; }
.rec-undo { width: 14px; height: 14px; margin-left: 12px; }
.rec-trash { width: 13px; height: 16px; margin-left: 12px; }

/* Taskbar */
.taskbar { height: 40px; flex: none; display: flex; align-items: center; background: #1a1a1a; font: 400 9.700px "Open Sans", sans-serif; color: #e6e6e6; position: relative; }
.task-apps { display: flex; align-items: center; margin-left: 520px; }
.app-win { width: 20px; height: 20px; }
.app-edge-wrap { width: 33px; height: 33px; margin-left: 11px; background: #282828; border-radius: 4px; display: flex; align-items: center; justify-content: center; position: relative; }
.app-edge-wrap::after { content: ""; position: absolute; bottom: 1px; left: 10px; width: 13px; height: 3px; border-radius: 2px; background: #58b7ee; }
.app-edge { width: 21px; height: 21px; }
.app-ico { width: 21px; height: 20px; }
.task-apps > .app-ico { margin-left: 10px; }
.app-run { margin-left: 16px; position: relative; display: block; }
.app-run::after { content: ""; position: absolute; left: 7px; bottom: -6px; width: 6px; height: 2px; background: #8a8a8a; }
.tray { position: absolute; right: 16px; top: 0; height: 40px; display: flex; align-items: center; }
.tray-chev { width: 11px; height: 7px; }
.tray-cloud { width: 15px; height: 10px; margin-left: 14px; color: #d5d5d5; }
.tray-mic { width: 10px; height: 14px; margin-left: 13.500px; color: #6ec3d8; }
.lang { width: 30px; margin-left: 12.500px; text-align: center; line-height: 13px; }
.tray-ico { width: 15px; height: 13px; margin-left: 5px; }
.tray-wifi { margin-left: 9px; }
.clock { width: 54px; margin-left: 10.500px; text-align: right; line-height: 13.500px; }
```
